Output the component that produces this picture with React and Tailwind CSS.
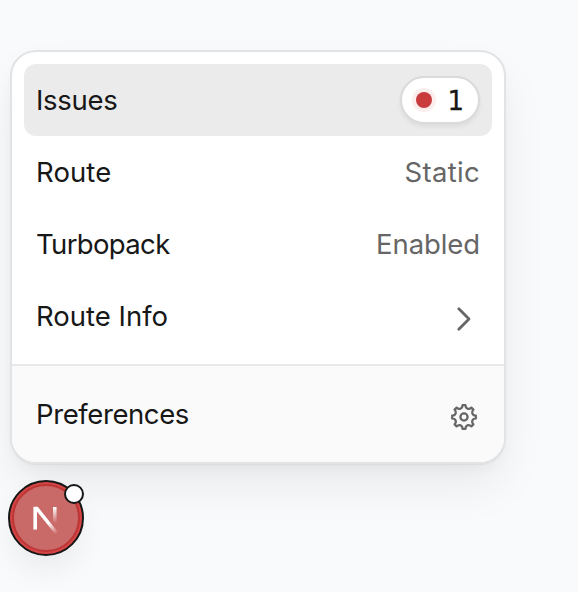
function Row({ label, active, children }) {
  return (
    <div className={active ? "flex h-[72px] items-center justify-between rounded-xl bg-[#ebebeb] px-3" : "flex h-[72px] items-center justify-between rounded-xl px-3"}>
      {label}
      {children}
    </div>
  );
}

function Label({ children, className }) {
  return <span className={`whitespace-nowrap text-[27.5px] leading-10 ${className}`}>{children}</span>;
}

// Outline of an eight-toothed wheel, centred on the origin.
function gearPath() {
  const at = (radius, degrees) => {
    const a = (degrees * Math.PI) / 180;
    return `${(radius * Math.cos(a)).toFixed(2)} ${(radius * Math.sin(a)).toFixed(2)}`;
  };
  let d = "";
  for (let i = 0; i < 8; i++) {
    const c = i * 45;
    d += `${i ? "L" : "M"}${at(11.9, c - 7)}L${at(11.9, c + 7)}Q${at(9.4, c + 10)} ${at(9.3, c + 17)}Q${at(9, c + 22.5)} ${at(9.3, c + 28)}Q${at(9.4, c + 35)} ${at(11.9, c + 38)}`;
  }
  return d + "Z";
}

function Gear() {
  return (
    <svg className="mt-1.5 mr-px size-[30px]" viewBox="-15 -15 30 30" fill="none" stroke="#666" strokeWidth="2.3" strokeLinejoin="round">
      <path d={gearPath()} />
      <circle r="3.6" />
    </svg>
  );
}

export default function App() {
  return (
    <main className="h-[592px] w-[578px] overflow-hidden bg-[#f9fafb] pt-[50px] font-['Inter',sans-serif] text-[#171717]">
      <section className="ml-2.5 w-[496px] overflow-hidden rounded-[26px] border-2 border-[#e2e3e4] bg-white shadow-[0_1px_1px_rgba(0,0,0,0.05),0_8px_16px_-4px_rgba(0,0,0,0.04),0_24px_48px_-4px_rgba(0,0,0,0.07)]">
        <div className="p-3">
          <Row active label={<Label className="tracking-[-0.3px]">Issues</Label>}>
            <div className="flex h-12 w-20 items-center rounded-full border-2 border-[#dadada] bg-white pl-[14px] shadow-[0_3px_4px_rgba(0,0,0,0.06)]">
              <span className="size-4 rounded-full bg-[#ca3c3c] shadow-[0_0_0_4px_#fdeeee]" />
              <span className="mt-0.5 ml-[15.5px] text-[26px] leading-8 font-['DejaVu_Sans',sans-serif] [-webkit-text-stroke:0.3px_#171717]">1</span>
            </div>
          </Row>
          <Row label={<Label className="tracking-[0.1px]">Route</Label>}>
            <Label className="tracking-[0.3px]">
              <span className="text-[#666]">Static</span>
            </Label>
          </Row>
          <Row label={<Label className="tracking-[-0.65px]">Turbopack</Label>}>
            <Label className="tracking-[-0.1px]">
              <span className="text-[#666]">Enabled</span>
            </Label>
          </Row>
          <Row label={<Label className="tracking-[0px]">Route Info</Label>}>
            <svg className="mt-1.5 mr-2 h-[26px] w-4" viewBox="0 0 16 26" fill="none" stroke="#666" strokeWidth="2.8" strokeLinecap="round" strokeLinejoin="round">
              <path d="m2.8 2.8 10.2 10.2-10.2 10.2" />
            </svg>
          </Row>
        </div>
        <div className="border-t-2 border-[#e9e9e9] bg-[#fafafa] p-3">
          <Row label={<Label className="tracking-[-0.4px]">Preferences</Label>}>
            <Gear />
          </Row>
        </div>
      </section>
      <div className="relative mt-4 ml-2 size-[76px] rounded-full shadow-[0_16px_32px_-4px_rgba(0,0,0,0.07)]">
        <svg className="size-[76px]" viewBox="0 0 76 76" fill="none">
          <defs>
            <linearGradient id="diagonal" x1="42" y1="42" x2="50" y2="53" gradientUnits="userSpaceOnUse">
              <stop stopColor="#fff" />
              <stop offset="1" stopColor="#fff" stopOpacity="0" />
            </linearGradient>
            <linearGradient id="stem" x1="47" y1="27" x2="47" y2="43" gradientUnits="userSpaceOnUse">
              <stop stopColor="#fff" />
              <stop offset="1" stopColor="#fff" stopOpacity="0" />
            </linearGradient>
          </defs>
          <circle cx="38" cy="38" r="37" fill="#d64545" stroke="#171717" strokeWidth="2" />
          <circle cx="38" cy="38" r="33" fill="#ca6a68" stroke="#bd3535" strokeWidth="2" />
          <path d="M45 27h3.6v16H45Z" fill="url(#stem)" />
          <path d="M25.4 49.4V26.8h4.4l20.2 25.4-2.7 2.1L29 31.5v17.9Z" fill="url(#diagonal)" />
        </svg>
        <span className="absolute top-1 left-14 size-5 rounded-full border-2 border-[#171717] bg-white" />
      </div>
    </main>
  );
}
